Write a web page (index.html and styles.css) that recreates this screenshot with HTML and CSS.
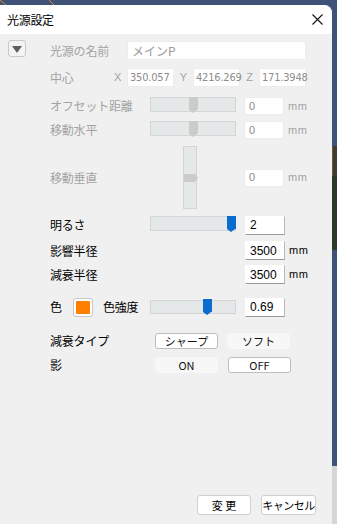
FILE: index.html
```html
<!DOCTYPE html>
<html lang="ja">
  <head>
    <meta charset="utf-8">
    <meta name="viewport" content="width=device-width">
    <title>光源設定</title>
    <link rel="stylesheet" href="styles.css">
  </head>

  <body>
    <div class="desk">
      <div class="main">
        <div class="topstrip">
          <svg width="332" height="5" viewBox="0 0 332 5">
            <line x1="0" y1="0" x2="6" y2="5" stroke="#d98a2b" stroke-width="1"/>
            <line x1="49" y1="0" x2="54" y2="5" stroke="#d98a2b" stroke-width="1"/>
          </svg>
        </div>

        <div class="dialog">
          <div class="titlebar">
            <span class="title">光源設定</span>
            <button class="close" title="閉じる">
              <svg width="11" height="11" viewBox="0 0 11 11">
                <path d="M0.5 0.5 L10.5 10.5 M10.5 0.5 L0.5 10.5" stroke="#111" stroke-width="1.1" fill="none"/>
              </svg>
            </button>
          </div>

          <div class="content">
            <div class="side">
              <button class="toggle"><span class="tri"></span></button>
            </div>

            <div class="form">
              <div class="row h19">
                <span class="label off w77">光源の名前</span>
                <span class="field name">メインP</span>
              </div>

              <div class="row h19 mt8">
                <span class="label off w64">中心</span>
                <span class="axis first">X</span>
                <span class="field coord">350.057</span>
                <span class="axis">Y</span>
                <span class="field coord">4216.269</span>
                <span class="axis">Z</span>
                <span class="field coord">171.3948</span>
              </div>

              <div class="row h18 mt10">
                <span class="label off w100">オフセット距離</span>
                <div class="track"><span class="thumb grey at50"></span></div>
                <span class="field num">0</span>
                <span class="unit off">mm</span>
              </div>

              <div class="row h18 mt6">
                <span class="label off w100">移動水平</span>
                <div class="track"><span class="thumb grey at50"></span></div>
                <span class="field num">0</span>
                <span class="unit off">mm</span>
              </div>

              <div class="row h63 mt7">
                <span class="label off w133">移動垂直</span>
                <div class="vtrack"><span class="vthumb"></span></div>
                <span class="field num vnum">0</span>
                <span class="unit off">mm</span>
              </div>

              <div class="row h18 mt7">
                <span class="label w100">明るさ</span>
                <div class="track"><span class="thumb blue at-end"></span></div>
                <span class="field num live">2</span>
              </div>

              <div class="row h19 mt7">
                <span class="label w186">影響半径</span>
                <span class="field num live">3500</span>
                <span class="unit">mm</span>
              </div>

              <div class="row h19 mt5">
                <span class="label w186">減衰半径</span>
                <span class="field num live">3500</span>
                <span class="unit">mm</span>
              </div>

              <div class="row h20 mt13">
                <span class="label w23">色</span>
                <span class="swatch"><span class="fill"></span></span>
                <span class="label pl11">色強度</span>
                <div class="track thin"><span class="thumb blue at66"></span></div>
                <span class="field num live">0.69</span>
              </div>

              <div class="row h16 mt16">
                <span class="label w105">減衰タイプ</span>
                <button class="seg on">シャープ</button>
                <button class="seg">ソフト</button>
              </div>

              <div class="row h16 mt8">
                <span class="label w105">影</span>
                <button class="seg">ON</button>
                <button class="seg on">OFF</button>
              </div>
            </div>

            <div class="footer">
              <button class="btn ok">変 更</button>
              <button class="btn">キャンセル</button>
            </div>
          </div>
        </div>
      </div>

      <div class="edge">
        <div class="e-blue top"></div>
        <div class="e-frame"></div>
        <div class="e-green"></div>
        <div class="e-blue mid"></div>
        <div class="e-grey"></div>
      </div>
    </div>
  </body>
</html>
```

FILE: styles.css
```css
html, body {
  margin: 0;
  padding: 0;
}

body {
  background: #3f5378;
  font: 12px/1 "Noto Sans CJK JP", "Noto Sans", sans-serif;
  color: #000;
  width: 337px;
  height: 524px;
  overflow: hidden;
}

button {
  font: inherit;
  cursor: default;
}

.desk {
  display: flex;
  height: 524px;
}

.main {
  width: 332px;
  display: flex;
  flex-direction: column;
}

.topstrip {
  height: 5px;
  line-height: 0;
}

.dialog {
  flex: 1;
  display: flex;
  flex-direction: column;
  background: #f0f0f0;
  border-top-right-radius: 8px;
  overflow: hidden;
}

.titlebar {
  height: 29px;
  background: #fff;
  display: flex;
  align-items: center;
  justify-content: space-between;
  padding: 0 9px 0 7px;
}

.title {
  font-size: 12px;
  letter-spacing: -0.3px;
}

.close {
  border: 0;
  background: none;
  padding: 0;
  width: 12px;
  height: 12px;
  line-height: 0;
}

.content {
  flex: 1;
  display: grid;
  grid-template-columns: 42px 1fr;
  grid-template-rows: auto 1fr;
  padding-left: 8px;
}

.side {
  padding-top: 6px;
}

.toggle {
  width: 18px;
  height: 17px;
  padding: 0;
  border: 1px solid #c9c9c9;
  border-radius: 3px;
  background: #f4f4f4;
  display: flex;
  align-items: center;
  justify-content: center;
}

.tri {
  width: 0;
  height: 0;
  border-left: 5px solid transparent;
  border-right: 5px solid transparent;
  border-top: 7px solid #5f5f5f;
  margin-top: 1px;
}

.form {
  padding-top: 7px;
}

.row {
  display: flex;
  align-items: center;
}

.h16 { height: 16px; }
.h18 { height: 18px; }
.h19 { height: 19px; }
.h20 { height: 20px; }
.h63 { height: 63px; }

.mt5 { margin-top: 5px; }
.mt6 { margin-top: 6px; }
.mt7 { margin-top: 7px; }
.mt8 { margin-top: 8px; }
.mt10 { margin-top: 10px; }
.mt13 { margin-top: 13px; }
.mt16 { margin-top: 16px; }

.label {
  flex: none;
  white-space: nowrap;
  letter-spacing: -0.2px;
}

.label.off,
.unit.off,
.axis {
  color: #a3a3a3;
}

.w23 { width: 23px; }
.w64 { width: 64px; }
.w77 { width: 77px; }
.w100 { width: 100px; }
.w105 { width: 105px; }
.w133 { width: 133px; }
.w186 { width: 186px; }
.pl11 { padding-left: 10px; width: 47px; }

.field {
  flex: none;
  box-sizing: border-box;
  background: #fff;
  border: 1px solid #ececec;
  height: 19px;
  display: flex;
  align-items: center;
  padding: 0 4px;
  color: #8a8a8a;
  white-space: nowrap;
}

.field.name {
  width: 179px;
  color: #9a9a9a;
}

.field.coord {
  width: 47px;
  padding: 0 2px;
  font: 11px/1 "DejaVu Sans Condensed", "Liberation Sans", sans-serif;
  letter-spacing: -0.2px;
  color: #8c8c8c;
}

.axis {
  flex: none;
  width: 19px;
  text-align: center;
  font: 11px/1 "Liberation Sans", sans-serif;
}

.axis.first {
  width: 13px;
  text-align: left;
}

.field.num {
  width: 40px;
  height: 18px;
  margin-left: 8px;
  font: 11px/1 "Liberation Sans", sans-serif;
  color: #888;
}

.field.vnum {
  margin-left: 47px;
}

.field.live {
  width: 40px;
  height: 19px;
  margin-left: 9px;
  color: #000;
  font-size: 12px;
  border: 1px solid #fff;
  border-right-color: #b8b8b8;
  border-bottom-color: #9a9a9a;
}

.unit {
  flex: none;
  margin-left: 4px;
  font: 11px/1 "Liberation Sans", sans-serif;
  letter-spacing: 0.6px;
}

.track {
  flex: none;
  position: relative;
  box-sizing: border-box;
  width: 86px;
  height: 15px;
  background: #e5e8e8;
  border: 1px solid #d3d5d5;
  align-self: flex-start;
}

.track.thin {
  height: 14px;
  align-self: center;
}

.thumb {
  position: absolute;
  top: -1px;
  width: 9px;
  height: 13px;
}

.thumb::after {
  content: "";
  position: absolute;
  left: 0;
  top: 13px;
  border-left: 4.5px solid transparent;
  border-right: 4.5px solid transparent;
  border-top: 3px solid;
}

.thumb.grey { background: #cbcbcb; }
.thumb.grey::after { border-top-color: #cbcbcb; }
.thumb.blue { background: #0b6ccf; }
.thumb.blue::after { border-top-color: #0b6ccf; }

.at50 { left: 38px; }
.at66 { left: 52px; top: -2px; }
.at-end { left: 76px; }

.vtrack {
  flex: none;
  position: relative;
  box-sizing: border-box;
  width: 14px;
  height: 63px;
  background: #e5e8e8;
  border: 1px solid #d3d5d5;
}

.vthumb {
  position: absolute;
  left: 0;
  top: 27px;
  width: 11px;
  height: 8px;
  background: #cbcbcb;
}

.vthumb::after {
  content: "";
  position: absolute;
  left: 11px;
  top: 0;
  border-top: 4px solid transparent;
  border-bottom: 4px solid transparent;
  border-left: 3px solid #cbcbcb;
}

.swatch {
  flex: none;
  box-sizing: border-box;
  width: 20px;
  height: 19px;
  border: 1px solid #c6c6c6;
  border-radius: 3px;
  background: #fff;
  padding: 2px;
}

.fill {
  display: block;
  width: 100%;
  height: 100%;
  background: #ff8000;
  border-radius: 1px;
}

.seg {
  flex: none;
  box-sizing: border-box;
  width: 63px;
  height: 16px;
  margin-right: 9px;
  padding: 0;
  border: 1px solid #f7f7f7;
  border-radius: 3px;
  background: #f7f7f7;
  font-size: 11px;
  line-height: 14px;
  color: #111;
}

.seg.on {
  background: #fff;
  border-color: #bdbdbd;
}

.row .seg:nth-of-type(2).on {
  margin-left: 1px;
}

.footer {
  grid-column: 1 / 3;
  align-self: end;
  display: flex;
  justify-content: flex-end;
  gap: 10px;
  padding: 0 16px 9px 0;
}

.btn {
  box-sizing: border-box;
  height: 20px;
  width: 55px;
  padding: 0;
  background: #fff;
  border: 1px solid #d0d0d0;
  border-radius: 3px;
  font-size: 11px;
  letter-spacing: -0.5px;
}

.btn.ok {
  width: 54px;
  letter-spacing: 0;
}

.edge {
  width: 5px;
  display: flex;
  flex-direction: column;
}

.e-blue.top { height: 146px; }
.e-frame {
  height: 30px;
  background: #3d3d33;
  border-left: 1px solid #6b5a3a;
  box-sizing: border-box;
}
.e-green { height: 74px; background: #2e3b28; }
.e-blue.mid { height: 216px; }
.e-grey { flex: 1; background: #d6d6d6; }
```
